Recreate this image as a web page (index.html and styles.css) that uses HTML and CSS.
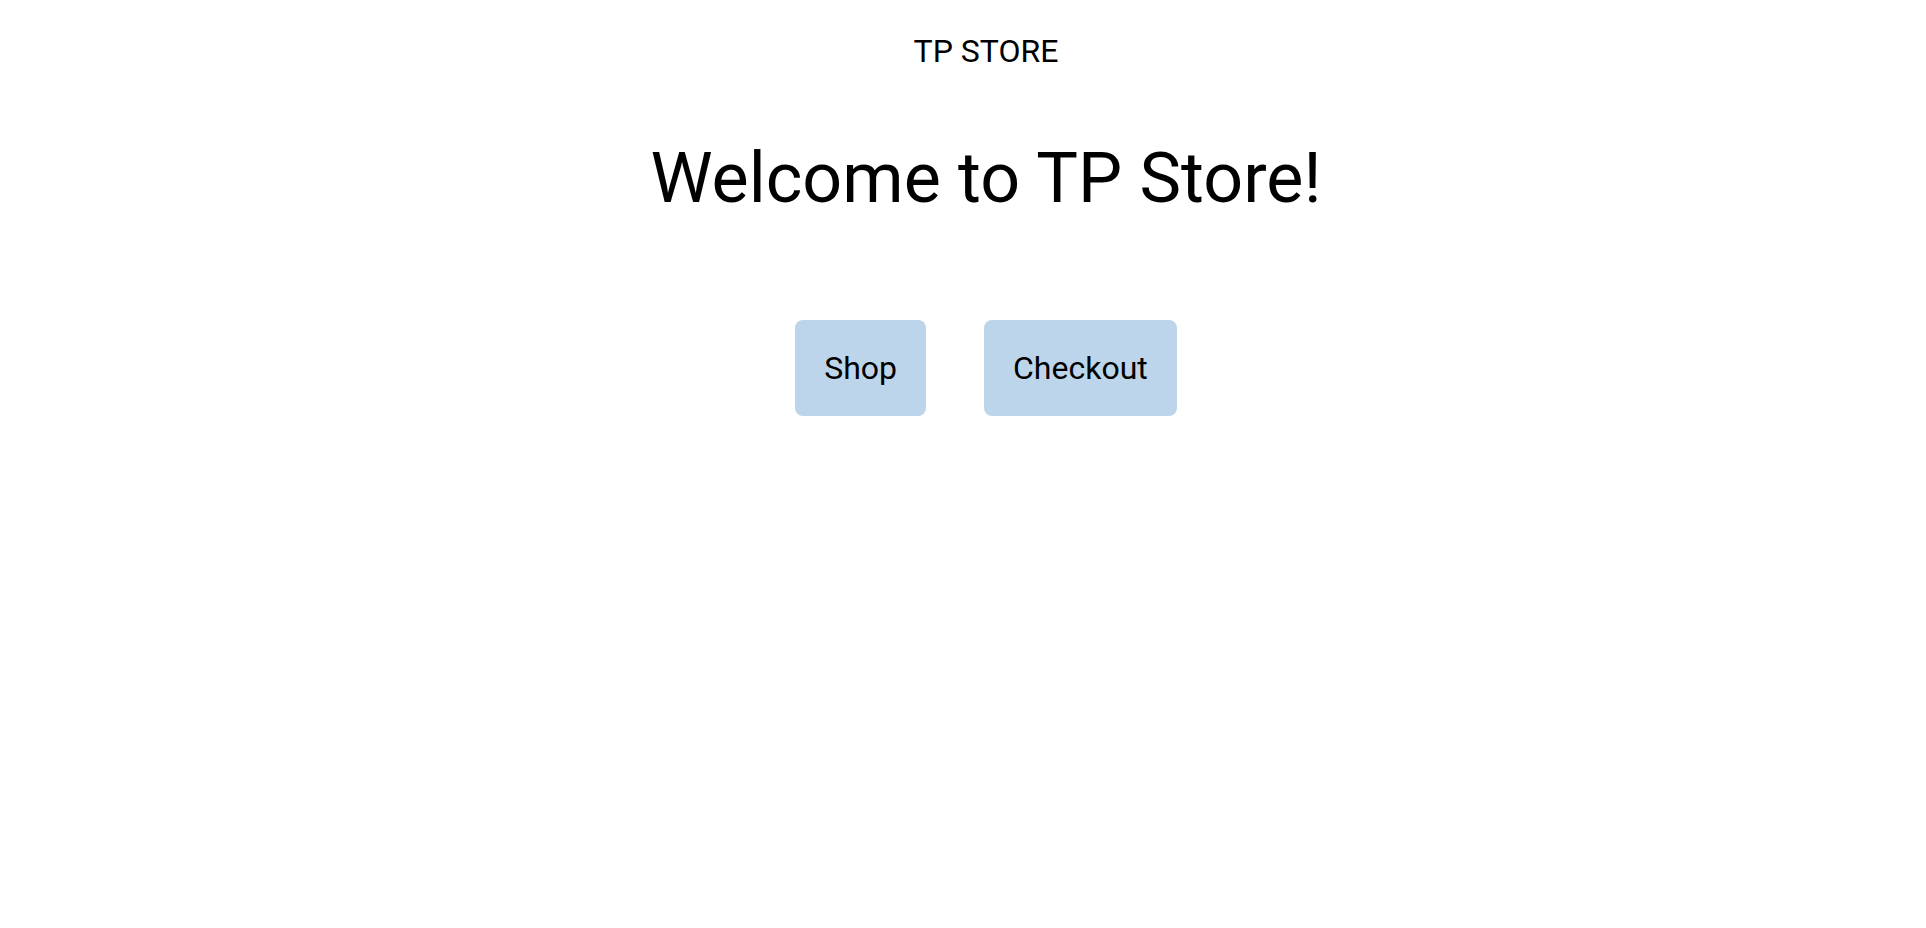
FILE: index.html
```html
<!DOCTYPE html>
<html lang="en">
<head>
<meta charset="utf-8">
<title>TP Store</title>
<link rel="stylesheet" href="styles.css">
</head>
<body>
<div class="app">
  <header class="topbar">
    <h1 class="brand">TP STORE</h1>
  </header>
  <main class="home">
    <h2 class="welcome">Welcome to TP Store!</h2>
    <nav class="actions">
      <button class="btn">Shop</button>
      <button class="btn">Checkout</button>
    </nav>
  </main>
</div>
</body>
</html>
```
FILE: styles.css
```css
html, body {
  margin: 0;
  padding: 0;
  background: #ffffff;
}
body {
  font-family: Roboto, "Liberation Sans", sans-serif;
  color: #000;
}
.app {
  display: flex;
  flex-direction: column;
  align-items: center;
  padding-left: 46px;
}
.topbar {
  padding-top: 32px;
}
.brand {
  margin: 0;
  font-size: 32px;
  font-weight: 400;
  line-height: normal;
}
.home {
  display: flex;
  flex-direction: column;
  align-items: center;
}
.welcome {
  margin: 67px 0 0;
  font-size: 70px;
  font-weight: 400;
  line-height: normal;
}
.actions {
  display: flex;
  gap: 58px;
  margin-top: 101px;
}
.btn {
  font-family: Roboto, "Liberation Sans", sans-serif;
  font-size: 32px;
  line-height: normal;
  color: #000;
  background: #bdd5ea;
  border: none;
  border-radius: 8px;
  padding: 29px 29px 29px;
  cursor: pointer;
}
```
